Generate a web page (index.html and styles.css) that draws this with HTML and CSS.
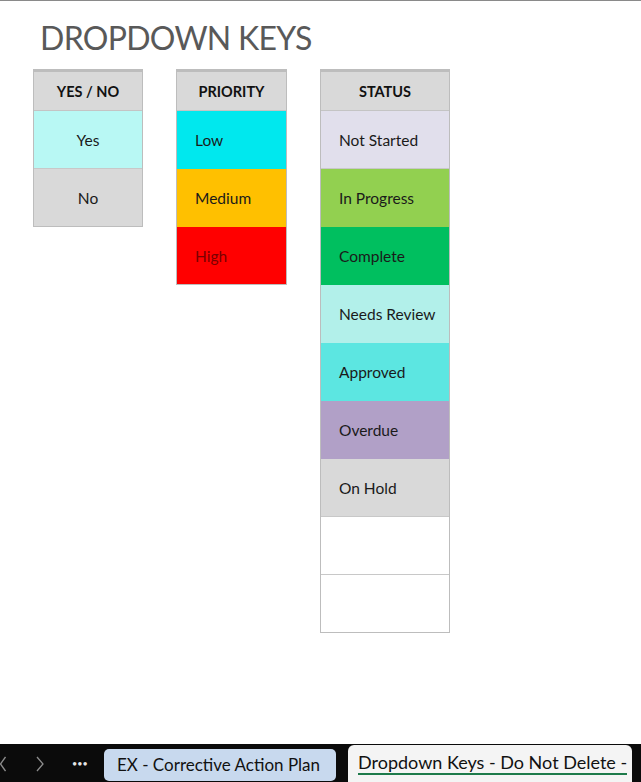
FILE: index.html
```html
<!DOCTYPE html>
<html>
<head>
<meta charset="utf-8">
<link rel="stylesheet" href="styles.css">
</head>
<body>
<div class="sheet">
  <h1 class="title">DROPDOWN KEYS</h1>
  <div class="tables">
    <div class="key key-yn">
      <div class="head">YES / NO</div>
      <div class="cell center c-yes">Yes</div>
      <div class="cell center c-gray">No</div>
    </div>
    <div class="key key-pri">
      <div class="head">PRIORITY</div>
      <div class="cell c-low">Low</div>
      <div class="cell c-med">Medium</div>
      <div class="cell c-high">High</div>
    </div>
    <div class="key key-status">
      <div class="head">STATUS</div>
      <div class="cell c-ns">Not Started</div>
      <div class="cell c-ip">In Progress</div>
      <div class="cell c-comp">Complete</div>
      <div class="cell c-nr">Needs Review</div>
      <div class="cell c-appr">Approved</div>
      <div class="cell c-over">Overdue</div>
      <div class="cell c-gray">On Hold</div>
      <div class="cell c-empty"></div>
      <div class="cell c-empty"></div>
    </div>
  </div>
</div>
<div class="tabbar">
  <svg class="nav" width="6" height="16" viewBox="0 0 6 16"><path d="M5.5 1 L0.5 8 L5.5 15" fill="none" stroke="#8c8c8c" stroke-width="1.3"/></svg>
  <svg class="nav nav-next" width="8" height="16" viewBox="0 0 8 16"><path d="M1 1 L7 8 L1 15" fill="none" stroke="#8c8c8c" stroke-width="1.3"/></svg>
  <span class="dots">&#x2022;&#x2022;&#x2022;</span>
  <span class="tab tab-other">EX - Corrective Action Plan</span>
  <span class="tab tab-active"><span class="tab-label">Dropdown Keys - Do Not Delete -</span></span>
</div>
</body>
</html>
```
FILE: styles.css
```css
* { box-sizing: border-box; }
html, body { margin: 0; padding: 0; }
body {
  width: 641px;
  height: 782px;
  background: #ffffff;
  font-family: "Lato", "Open Sans", sans-serif;
  overflow: hidden;
}
.sheet {
  height: 744px;
  border-top: 1px solid #8a8a8a;
}
.title {
  margin: 0;
  padding: 17px 0 0 40px;
  height: 68px;
  font-weight: 400;
  font-size: 32px;
  line-height: 40px;
  color: #595959;
  letter-spacing: -0.7px;
  white-space: nowrap;
}
.tables {
  display: flex;
  align-items: flex-start;
  gap: 33px;
  padding-left: 33px;
}
.key {
  display: flex;
  flex-direction: column;
  flex-shrink: 0;
  border: 1px solid #bdbdbd;
  border-top: 3px solid #bdbdbd;
}
.key-yn { width: 110px; }
.key-pri { width: 111px; }
.key-status { width: 130px; }
.head {
  height: 39px;
  background: #d9d9d9;
  font-weight: 700;
  font-size: 14.5px;
  color: #111;
  display: flex;
  align-items: center;
  justify-content: center;
  border-bottom: 1px solid #c4c4c4;
}
.cell {
  height: 58px;
  display: flex;
  align-items: center;
  padding-left: 18px;
  font-size: 15.5px;
  color: #1a1a1a;
  border-bottom: 1px solid #c8c8c8;
}
.cell:last-child { border-bottom: none; height: 57px; }
.center { justify-content: center; padding-left: 0; }
.c-yes { background: #b8f8f4; }
.c-gray { background: #d9d9d9; }
.c-low { background: #00e8ee; border-bottom-color: #00e8ee; }
.c-med { background: #ffc000; border-bottom-color: #ffc000; }
.c-high { background: #ff0000; color: #7a0000; }
.c-ns { background: #e1dfec; }
.c-ip { background: #92d050; border-bottom-color: #92d050; }
.c-comp { background: #00bf5f; border-bottom-color: #00bf5f; }
.c-nr { background: #b2f0ea; border-bottom-color: #b2f0ea; }
.c-appr { background: #5ce6e1; border-bottom-color: #5ce6e1; }
.c-over { background: #b1a0c7; border-bottom-color: #b1a0c7; }
.c-empty { background: #ffffff; }

.tabbar {
  height: 38px;
  background: #0b0b0b;
  display: flex;
  align-items: center;
  white-space: nowrap;
}
.nav {
  flex-shrink: 0;
  display: block;
  margin-top: 2px;
}
.nav-next { margin-left: 30px; }
.dots {
  color: #e6e6e6;
  font-size: 9px;
  margin-left: 28px;
  width: 32px;
  flex-shrink: 0;
}
.tab {
  color: #111;
  display: flex;
  align-items: center;
  flex-shrink: 0;
}
.tab-other {
  font-size: 17px;
  background: #c8d9ee;
  height: 32px;
  padding: 0 13px;
  border-radius: 5px;
  width: 232px;
  margin-top: 3px;
}
.tab-active {
  font-size: 18px;
  background: #f4f4f4;
  height: 37px;
  margin-left: 12px;
  padding: 0 10px;
  border-radius: 6px 6px 0 0;
  width: 284px;
  align-self: flex-end;
}
.tab-label {
  border-bottom: 2px solid #1d7a4a;
  padding-bottom: 1px;
  line-height: 20px;
}
```
